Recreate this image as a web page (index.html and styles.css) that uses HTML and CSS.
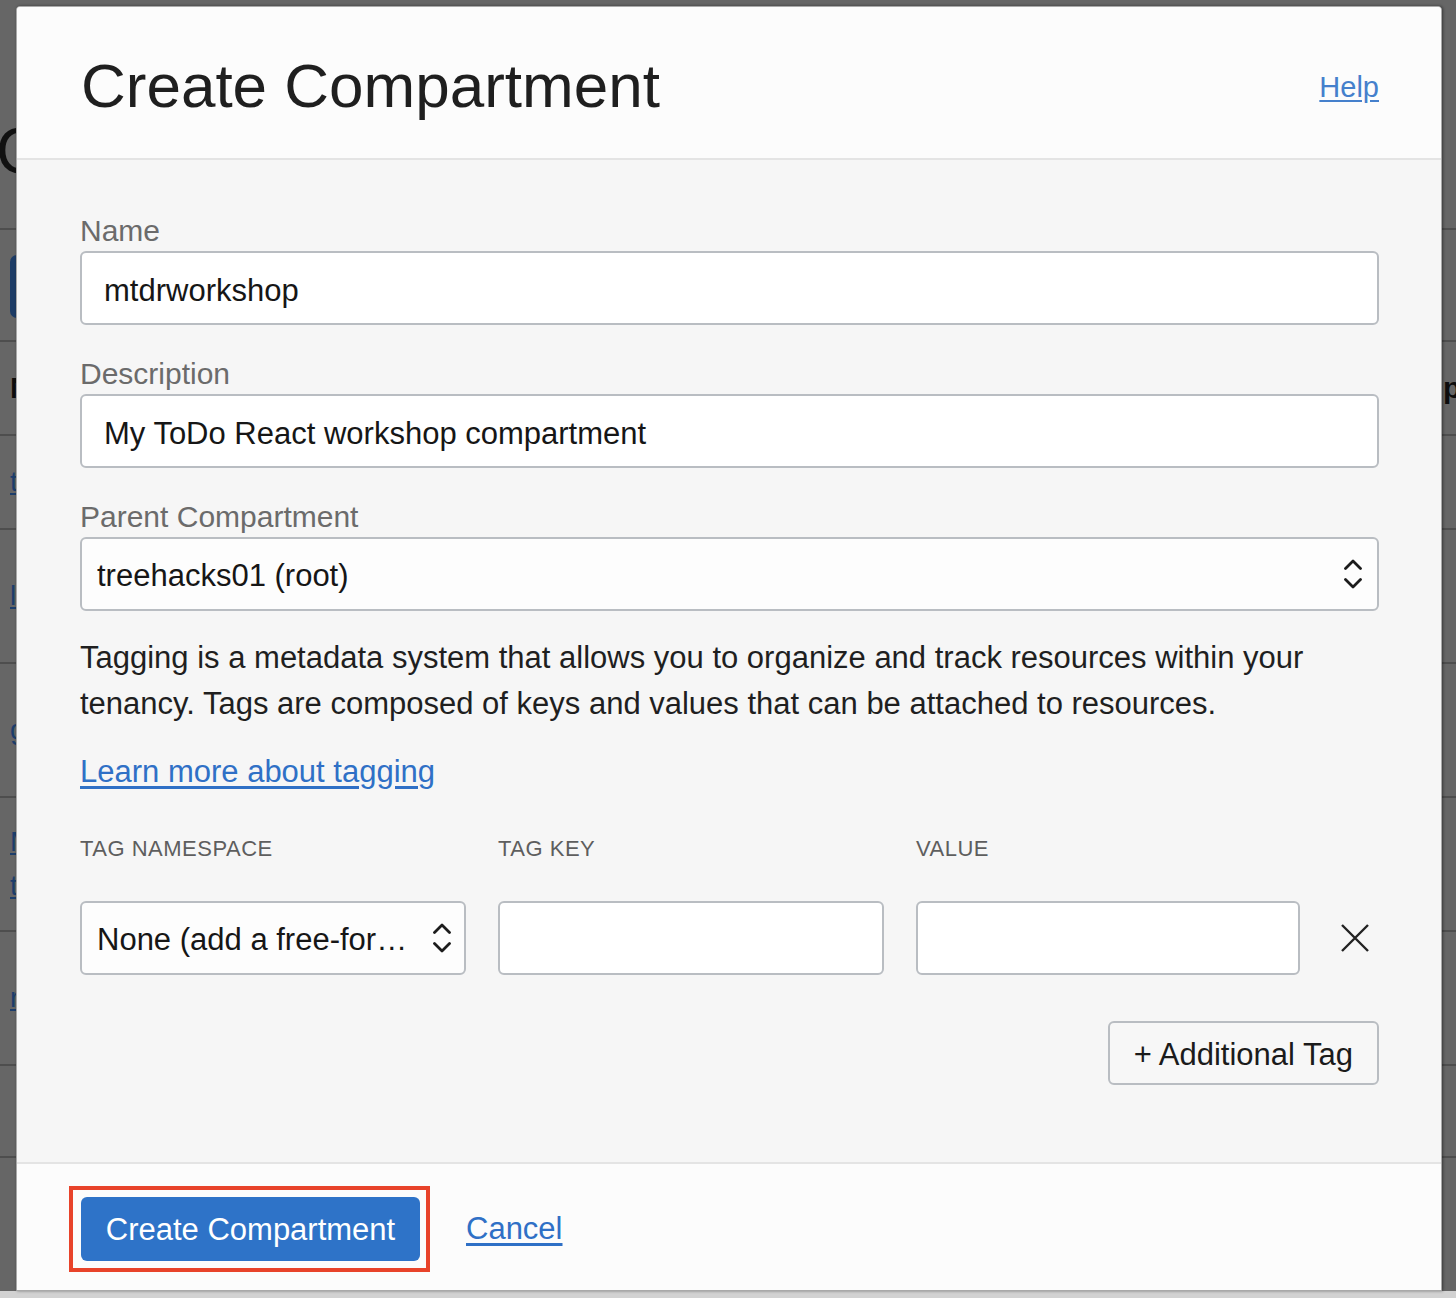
FILE: index.html
```html
<!DOCTYPE html>
<html lang="en">
<head>
<meta charset="utf-8">
<title>Create Compartment</title>
<link rel="stylesheet" href="styles.css">
</head>
<body>
<div class="page">
  <div class="page-head"><h1 class="page-title">Compartments</h1></div>
  <div class="toolbar"><span class="page-btn">Create Compartment</span></div>
  <div class="trow thead"><span class="tcell">Name</span><span class="tcell">parent</span></div>
  <div class="trow r94"><a class="tlink">treehacks01</a></div>
  <div class="trow r134"><a class="tlink">lab-compartment</a></div>
  <div class="trow r134"><a class="tlink">gitops</a></div>
  <div class="trow r134"><a class="tlink two">ManagedCompartment<br>treehacks</a></div>
  <div class="trow r134"><a class="tlink">react-dev</a></div>
  <div class="trow r92"></div>
  <div class="trow rest"></div>
  <div class="hscroll"></div>
</div>

<div class="modal">
  <header class="modal-header">
    <h2 class="modal-title">Create Compartment</h2>
    <a class="help-link" href="#">Help</a>
  </header>

  <div class="modal-body">
    <div class="field">
      <label class="field-label">Name</label>
      <div class="input">mtdrworkshop</div>
    </div>
    <div class="field">
      <label class="field-label">Description</label>
      <div class="input">My ToDo React workshop compartment</div>
    </div>
    <div class="field">
      <label class="field-label">Parent Compartment</label>
      <div class="input select">
        <span class="select-text">treehacks01 (root)</span>
        <svg class="chev" width="18" height="30" viewBox="0 0 18 30"><path d="M1.5 9.5 L9 2 L16.5 9.5 M1.5 20.5 L9 28 L16.5 20.5" fill="none" stroke="#1c1c1c" stroke-width="2.8" stroke-linecap="round" stroke-linejoin="round"/></svg>
      </div>
    </div>

    <p class="info">Tagging is a metadata system that allows you to organize and track resources within your tenancy. Tags are composed of keys and values that can be attached to resources.</p>
    <a class="learn" href="#">Learn more about tagging</a>

    <div class="tag-grid">
      <span class="tag-label">TAG NAMESPACE</span>
      <span class="tag-label">TAG KEY</span>
      <span class="tag-label">VALUE</span>
      <span></span>

      <div class="input select tag-select">
        <span class="select-text">None (add a free-for…</span>
        <svg class="chev" width="18" height="30" viewBox="0 0 18 30"><path d="M1.5 9.5 L9 2 L16.5 9.5 M1.5 20.5 L9 28 L16.5 20.5" fill="none" stroke="#1c1c1c" stroke-width="2.8" stroke-linecap="round" stroke-linejoin="round"/></svg>
      </div>
      <div class="input"></div>
      <div class="input"></div>
      <div class="remove">
        <svg width="30" height="30" viewBox="0 0 30 30"><path d="M2 2 L28 28 M28 2 L2 28" fill="none" stroke="#222" stroke-width="2.4"/></svg>
      </div>
    </div>

    <div class="add-row"><button class="add-btn">+ Additional Tag</button></div>
  </div>

  <footer class="modal-footer">
    <div class="primary-wrap">
      <button class="primary-btn">Create Compartment</button>
      <span class="highlight"></span>
    </div>
    <a class="cancel" href="#">Cancel</a>
  </footer>
</div>
</body>
</html>
```

FILE: styles.css
```css
* { box-sizing: border-box; }

html, body {
  margin: 0;
  padding: 0;
  width: 1456px;
  height: 1298px;
  overflow: hidden;
  background: #666666;
  font-family: "Liberation Sans", Arial, Helvetica, sans-serif;
}

/* ---------- dimmed background page ---------- */
.page {
  display: flex;
  flex-direction: column;
  height: 1298px;
  color: #111;
}
.page-head {
  height: 228px;
  padding-top: 119px;
}
.page-title {
  margin: 0 0 0 -4px;
  font-size: 64px;
  line-height: 64px;
  font-weight: 400;
  color: #111;
}
.toolbar {
  height: 112px;
  border-top: 2px solid #4e4e4e;
  padding: 25px 0 0 10px;
}
.page-btn {
  display: inline-block;
  height: 63px;
  width: 260px;
  border-radius: 7px;
  background: #1d3c66;
  color: #999;
  font-size: 26px;
  line-height: 63px;
  padding-left: 20px;
}
.trow {
  border-top: 2px solid #4e4e4e;
  display: flex;
  align-items: center;
  padding-left: 10px;
}
.thead {
  height: 94px;
  display: grid;
  grid-template-columns: 1433px 1fr;
  font-weight: 700;
  font-size: 30px;
  color: #0d0d0d;
}
.r94 { height: 94px; }
.r134 { height: 134px; }
.r92 { height: 92px; }
.rest { flex: 1; }
.tlink {
  font-size: 28px;
  line-height: 44px;
  color: #1c3d6b;
  text-decoration: underline;
}
.hscroll {
  height: 7px;
  background: #d2d2d2;
}

/* ---------- modal ---------- */
.modal {
  position: absolute;
  left: 16px;
  top: 6px;
  width: 1426px;
  height: 1285px;
  border: 1px solid #a9a9a9;
  border-radius: 4px 4px 0 0;
  box-shadow: 1px 0 3px rgba(0,0,0,0.45);
  background: #f6f6f6;
  display: flex;
  flex-direction: column;
  overflow: hidden;
}

.modal-header {
  height: 153px;
  flex: none;
  background: #fcfcfc;
  border-bottom: 2px solid #e4e4e4;
  display: flex;
  align-items: center;
  justify-content: space-between;
  padding: 0 62px 0 64px;
}
.modal-title {
  margin: 6px 0 0 0;
  font-size: 62px;
  line-height: 62px;
  font-weight: 400;
  color: #1f1f1f;
}
.help-link {
  margin-top: 9px;
  font-size: 29px;
  line-height: 29px;
  color: #4580cc;
  text-decoration: underline;
  text-underline-offset: 3px;
}

.modal-body {
  flex: none;
  padding: 53px 62px 77px 63px;
}

.field { margin-bottom: 31px; }
.field:nth-of-type(3) { margin-bottom: 0; }
.field-label {
  display: block;
  font-size: 30px;
  line-height: 36px;
  color: #6b6b6b;
  margin-bottom: 2px;
}
.input {
  height: 74px;
  background: #ffffff;
  border: 2px solid #b9bdc2;
  border-radius: 6px;
  padding: 5px 22px 0;
  display: flex;
  align-items: center;
  font-size: 31px;
  color: #161616;
  white-space: nowrap;
}
.select {
  padding: 4px 15px 0 15px;
  justify-content: space-between;
  background: #fdfdfd;
}
.select .chev { margin-top: -4px; }
.select-text { overflow: hidden; }

.info {
  margin: 24px 0 0 0;
  font-size: 31px;
  line-height: 46px;
  color: #1f1f1f;
}
.learn {
  display: block;
  width: max-content;
  margin-top: 22px;
  font-size: 31px;
  line-height: 46px;
  color: #2f70c6;
  text-decoration: underline;
  text-underline-offset: 4px;
}

.tag-grid {
  margin-top: 41px;
  display: grid;
  grid-template-columns: 386px 386px 384px 1fr;
  column-gap: 32px;
  row-gap: 39px;
  align-items: center;
}
.tag-label {
  font-size: 22px;
  line-height: 26px;
  color: #5e5e5e;
  letter-spacing: 0.5px;
}
.tag-select { padding-right: 13px; }
.remove {
  display: flex;
  padding-left: 8px;
}

.add-row {
  margin-top: 46px;
  display: flex;
  justify-content: flex-end;
}
.add-btn {
  height: 64px;
  padding: 4px 24px 0;
  background: #f7f7f7;
  border: 2px solid #b9bdc2;
  border-radius: 6px;
  font-family: inherit;
  font-size: 31px;
  color: #1b1b1b;
}

.modal-footer {
  flex: 1;
  background: #fcfcfc;
  border-top: 2px solid #e4e4e4;
  display: flex;
  align-items: center;
  padding: 3px 0 0 64px;
  gap: 46px;
}
.primary-wrap {
  position: relative;
  display: flex;
}
.primary-btn {
  width: 339px;
  height: 64px;
  padding-top: 3px;
  border: none;
  border-radius: 6px;
  background: #2e73c8;
  color: #ffffff;
  font-family: inherit;
  font-size: 31px;
}
.highlight {
  position: absolute;
  left: -12px;
  top: -11px;
  right: -10px;
  bottom: -11px;
  border: 4px solid #e8432a;
}
.cancel {
  font-size: 31px;
  color: #2f70c6;
  text-decoration: underline;
  text-underline-offset: 4px;
}
```
